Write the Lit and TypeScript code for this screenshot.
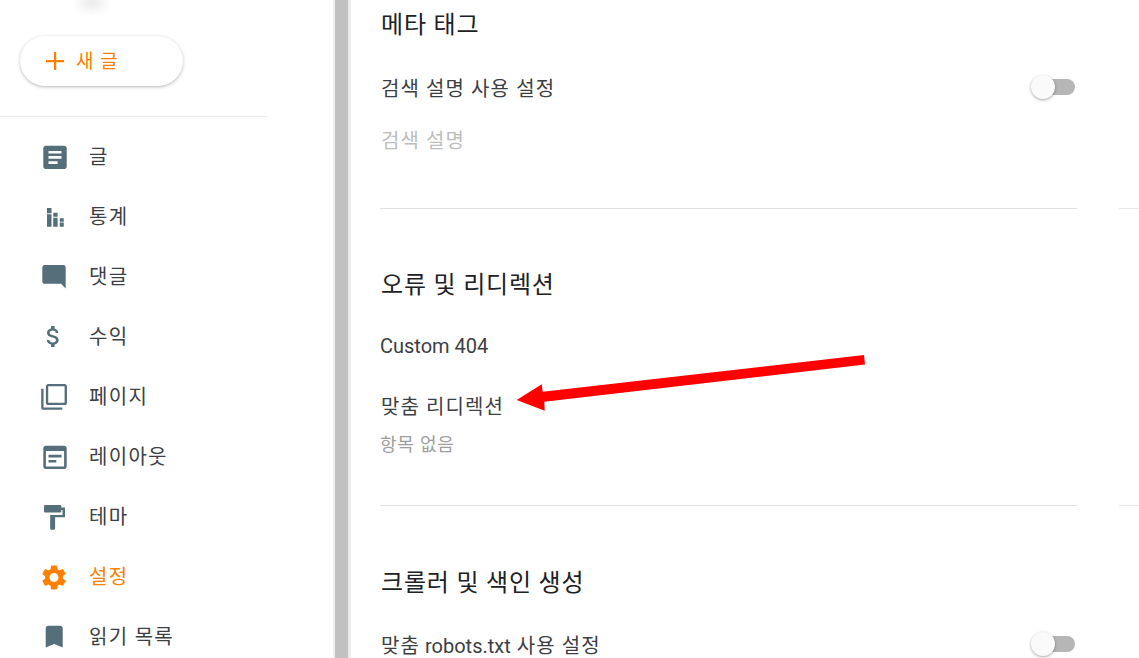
import { LitElement, html, css, svg } from "lit";
import { customElement } from "lit/decorators.js";

const icons: Record<string, unknown> = {
  post: svg`<path d="M19 3H5c-1.100 0-2 .9-2 2v14c0 1.100.9 2 2 2h14c1.100 0 2-.9 2-2V5c0-1.100-.9-2-2-2zm-5 14H7v-2h7v2zm3-4H7v-2h10v2zm0-4H7V7h10v2z"/>`,
  stats: svg`<path d="M5.600 5.600h3.600v4.200H5.600zM5.600 10.600h3.600v10H5.600zM10.600 9.400h3.500v3.200h-3.500zM10.600 13.400h3.500v7.200h-3.500zM15.800 13.800H19v2.800h-3.200zM15.800 17.100H19v3.500h-3.200z"/>`,
  comment: svg`<path d="M21.990 4c0-1.100-.89-2-1.990-2H4c-1.100 0-2 .9-2 2v12c0 1.100.9 2 2 2h14l4 4-.01-18z"/>`,
  money: svg`<path d="M11.800 10.900c-2.270-.59-3-1.200-3-2.150 0-1.090 1.010-1.850 2.700-1.850 1.780 0 2.440.85 2.500 2.100h2.210c-.07-1.720-1.120-3.300-3.210-3.810V3h-3v2.160c-1.940.42-3.500 1.680-3.500 3.610 0 2.310 1.910 3.460 4.700 4.130 2.500.6 3 1.480 3 2.410 0 .69-.49 1.790-2.700 1.790-2.060 0-2.870-.92-2.980-2.100h-2.200c.12 2.190 1.760 3.420 3.680 3.830V21h3v-2.150c1.950-.37 3.500-1.500 3.500-3.550 0-2.840-2.430-3.810-4.700-4.400z"/>`,
  pages: svg`<path d="M3 5H1v16c0 1.100.9 2 2 2h16v-2H3V5zm18-4H7c-1.100 0-2 .9-2 2v14c0 1.100.9 2 2 2h14c1.100 0 2-.9 2-2V3c0-1.100-.9-2-2-2zm0 16H7V3h14v14z"/>`,
  layout: svg`<path d="M19 3H5c-1.100 0-2 .9-2 2v14c0 1.100.9 2 2 2h14c1.100 0 2-.9 2-2V5c0-1.100-.9-2-2-2zm0 16H5V7h14v12zM7 10h10v2H7zm0 4h6v2H7z"/>`,
  theme: svg`<path d="M18 4V3c0-.55-.45-1-1-1H5c-.55 0-1 .45-1 1v4c0 .55.45 1 1 1h12c.55 0 1-.45 1-1V6h1v4H9v11c0 .55.45 1 1 1h2c.55 0 1-.45 1-1v-9h8V4h-3z"/>`,
  gear: svg`<path d="M19.140 12.940c.04-.3.06-.61.06-.94 0-.32-.02-.64-.07-.94l2.030-1.580c.18-.14.23-.41.12-.61l-1.920-3.320c-.12-.22-.37-.29-.59-.22l-2.390.96c-.5-.38-1.030-.7-1.620-.94l-.36-2.540c-.04-.24-.24-.41-.48-.41h-3.840c-.24 0-.43.17-.47.41l-.36 2.540c-.59.24-1.130.57-1.620.94l-2.390-.96c-.22-.08-.47 0-.59.22L2.740 8.870c-.12.21-.08.47.12.61l2.030 1.580c-.05.3-.09.63-.09.94s.02.64.07.94l-2.030 1.580c-.18.14-.23.41-.12.61l1.920 3.320c.12.22.37.29.59.22l2.390-.96c.5.38 1.030.7 1.620.94l.36 2.540c.05.24.24.41.48.41h3.840c.24 0 .44-.17.47-.41l.36-2.540c.59-.24 1.130-.56 1.620-.94l2.390.96c.22.08.47 0 .59-.22l1.920-3.320c.12-.22.07-.47-.12-.61l-2.010-1.580zM12 15.600c-1.980 0-3.600-1.620-3.600-3.600s1.620-3.600 3.600-3.600 3.600 1.620 3.600 3.600-1.620 3.600-3.600 3.600z"/>`,
  bookmark: svg`<path d="M17 3H7c-1.100 0-2 .9-2 2v16l7-3 7 3V5c0-1.100-.9-2-2-2z"/>`,
};

const nav = [
  ["post", "글", "0.46 -0.62 23.08 23.08"],
  ["stats", "통계", "0 0 24 24"],
  ["comment", "댓글", "0.03 -1.42 25.64 25.64"],
  ["money", "수익", "0.52 -1.28 25.7 25.7"],
  ["pages", "페이지", "-0.03 -1.56 25.64 25.64"],
  ["layout", "레이아웃", "0.46 -0.62 23.08 23.08"],
  ["theme", "테마", "0.76 -1.24 24.3 24.3"],
  ["gear", "설정", "0.75 -1.2 24.1 24.1"],
  ["bookmark", "읽기 목록", "0.3 -0.87 24.7 24.7"],
];

@customElement("app-root")
export class AppRoot extends LitElement {
  static styles = css`
    :host {
      display: block;
      position: relative;
      width: 1139px;
      height: 658px;
      overflow: hidden;
      background: #fff;
      font-family: Roboto, "Noto Sans CJK KR", sans-serif;
      color: #3c4043;
    }
    .page { display: flex; height: 658px; }
    .side { width: 267px; flex: none; position: relative; }
    .avatar {
      position: absolute; left: 72px; top: -10px; width: 40px; height: 26px;
      border-radius: 50%;
      background: radial-gradient(closest-side, #ececec, #ffffff);
    }
    .top { height: 116px; border-bottom: 1px solid #e8eaed; padding-left: 20px; display: flex; align-items: flex-start; }
    .new {
      margin-top: 36px; width: 163px; height: 50px; border-radius: 25px; background: #fff;
      box-shadow: 0 1px 3px 1px rgba(60,64,67,.18), 0 1px 1px rgba(60,64,67,.12);
      display: flex; align-items: center; gap: 12px; padding-left: 26px; padding-bottom: 4px; box-sizing: border-box;
      color: #ff8000; font-size: 19px; letter-spacing: 1px;
    }
    .new svg { width: 18px; height: 18px; flex: none; margin-top: 4px; }
    .nav { display: flex; flex-direction: column; padding-top: 9px; }
    .row { height: 60px; display: flex; align-items: center; padding-left: 40px; color: #3c4043; font-size: 20px; letter-spacing: 1.300px; }
    .row span { margin-top: -2px; }
    .row svg { width: 30px; height: 30px; fill: #546e7a; flex: none; margin-right: 19px; }
    .row.on { color: #ff8000; }
    .row.on svg { fill: #ff8000; }
    .gutter { width: 66px; flex: none; }
    .bar {
      width: 13px; flex: none; background: #c1c1c1;
      border-left: 2px solid #f0f0f0; border-right: 3px solid #ececec;
    }
    .main { flex: 1; padding-left: 29px; min-width: 0; }
    .sec { width: 697px; border-bottom: 1px solid #e0e0e0; position: relative; }
    .sec::after {
      content: ""; position: absolute; left: 739px; width: 20px; bottom: -1px; height: 1px; background: #e8e8e8;
    }
    .sec.last { border: 0; }
    .sec.last::after { display: none; }
    h2 { margin: 0; padding-left: 1px; font-weight: 400; font-size: 24px; letter-spacing: .8px; color: #202124; line-height: 32px; }
    .line { display: flex; justify-content: space-between; align-items: center; font-size: 20px; line-height: 28px; color: #3c4043; }
    .ko { letter-spacing: 1.100px; margin-left: 1px; }
    .s1 { height: 209px; padding-top: 9px; box-sizing: border-box; }
    .s1 .line { margin-top: 34px; }
    .ph { color: #bdbdbd; font-size: 20px; letter-spacing: 1.100px; padding-left: 1px; line-height: 28px; margin-top: 24px; }
    .s2 { height: 297px; padding-top: 60px; box-sizing: border-box; }
    .s2 .line.a { margin-top: 31px; }
    .s2 .line.b { margin-top: 33px; }
    .none { color: #9e9e9e; font-size: 18px; letter-spacing: .8px; line-height: 24px; margin-top: 12px; }
    .s3 { padding-top: 61px; }
    .s3 .line { margin-top: 33px; }
    .tog { position: relative; width: 44px; height: 16px; flex: none; margin-right: 2px; margin-top: -4px; }
    .tog::before { content: ""; position: absolute; right: 0; top: 0; width: 36px; height: 16px; border-radius: 8px; background: #b6b6b6; }
    .tog::after {
      content: ""; position: absolute; left: 0; top: -4px; width: 24px; height: 24px; border-radius: 50%;
      background: #fafafa; box-shadow: 0 1px 3px rgba(0,0,0,.35);
    }
    .arrow { position: absolute; left: 0; top: 0; width: 1139px; height: 658px; pointer-events: none; }
  `;

  render() {
    return html`
      <div class="page">
        <aside class="side">
          <div class="avatar"></div>
          <div class="top">
            <div class="new">
              <svg viewBox="0 0 18 18"><path d="M8 0h2.200v8H18v2.200h-7.800V18H8v-7.800H0V8h8z" fill="#ff8000"/></svg>
              <span>새 글</span>
            </div>
          </div>
          <nav class="nav">
            ${nav.map(
              ([i, t, vb]) => html`<div class="row ${i === "gear" ? "on" : ""}">
                <svg viewBox=${vb}>${icons[i]}</svg><span>${t}</span>
              </div>`
            )}
          </nav>
        </aside>
        <div class="gutter"></div>
        <div class="bar"></div>
        <main class="main">
          <section class="sec s1">
            <h2>메타 태그</h2>
            <div class="line"><span class="ko">검색 설명 사용 설정</span><span class="tog"></span></div>
            <div class="ph">검색 설명</div>
          </section>
          <section class="sec s2">
            <h2>오류 및 리디렉션</h2>
            <div class="line a"><span>Custom 404</span></div>
            <div class="line b"><span class="ko">맞춤 리디렉션</span></div>
            <div class="none">항목 없음</div>
          </section>
          <section class="sec s3 last">
            <h2>크롤러 및 색인 생성</h2>
            <div class="line"><span><span class="ko">맞춤</span> robots.txt <span class="ko">사용 설정</span></span><span class="tog"></span></div>
          </section>
        </main>
      </div>
      <svg class="arrow" viewBox="0 0 1139 658">
        <polygon points="516.700,400 541.700,384.300 542.700,391.700 864,355 865,364.500 544.300,401.700 544.700,410.700" fill="#ff0000"/>
      </svg>
    `;
  }
}
